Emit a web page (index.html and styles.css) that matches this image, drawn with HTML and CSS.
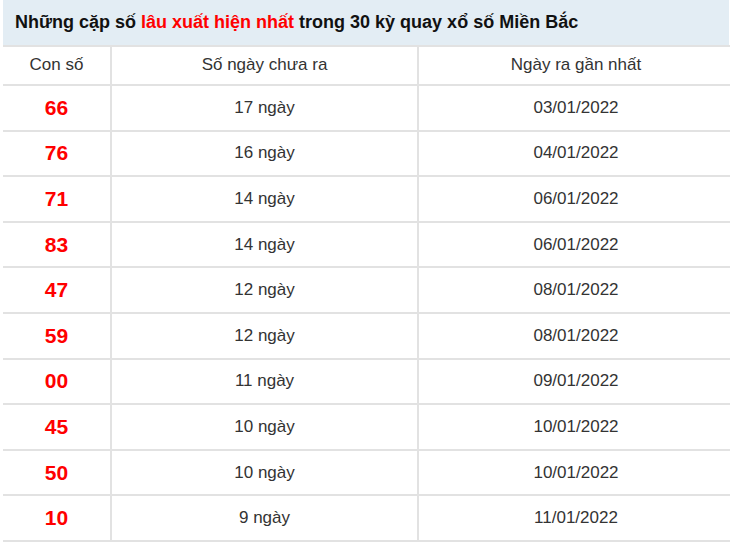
FILE: index.html
```html
<!DOCTYPE html>
<html lang="vi">
<head>
<meta charset="utf-8">
<title>Lô gan Miền Bắc</title>
<link rel="stylesheet" href="styles.css">
</head>
<body>
<div class="wrap">
  <div class="title">Những cặp số <span class="hl">lâu xuất hiện nhất</span> trong 30 kỳ quay xổ số Miền Bắc</div>
  <table class="tbl">
    <thead>
      <tr class="head"><th class="c1">Con số</th><th class="c2">Số ngày chưa ra</th><th class="c3">Ngày ra gần nhất</th></tr>
    </thead>
    <tbody>
      <tr><td class="num">66</td><td>17 ngày</td><td>03/01/2022</td></tr>
      <tr><td class="num">76</td><td>16 ngày</td><td>04/01/2022</td></tr>
      <tr><td class="num">71</td><td>14 ngày</td><td>06/01/2022</td></tr>
      <tr><td class="num">83</td><td>14 ngày</td><td>06/01/2022</td></tr>
      <tr><td class="num">47</td><td>12 ngày</td><td>08/01/2022</td></tr>
      <tr><td class="num">59</td><td>12 ngày</td><td>08/01/2022</td></tr>
      <tr><td class="num">00</td><td>11 ngày</td><td>09/01/2022</td></tr>
      <tr><td class="num">45</td><td>10 ngày</td><td>10/01/2022</td></tr>
      <tr><td class="num">50</td><td>10 ngày</td><td>10/01/2022</td></tr>
      <tr><td class="num">10</td><td>9 ngày</td><td>11/01/2022</td></tr>
    </tbody>
  </table>
</div>
</body>
</html>
```
FILE: styles.css
```css
html, body {
  margin: 0;
  padding: 0;
  background: #fff;
}
body {
  font-family: "Liberation Sans", Arial, sans-serif;
  color: #333;
}
.wrap {
  margin-left: 3px;
  width: 726px;
}
.title {
  height: 45px;
  line-height: 45px;
  background: #e3edf4;
  padding-left: 12px;
  font-size: 18px;
  font-weight: bold;
  color: #111;
  white-space: nowrap;
}
.hl {
  color: #f00;
}
.tbl {
  width: 726px;
  border-collapse: collapse;
  table-layout: fixed;
}
.tbl th, .tbl td {
  border: 2px solid #e2e2e2;
  text-align: center;
  padding: 0;
  font-size: 17px;
  font-weight: normal;
}
.tbl tr > :first-child { border-left: none; }
.tbl tr > :last-child { border-right: none; }
.c1 { width: 107px; }
.c2 { width: 305px; }
.c3 { width: 314px; }
.head { height: 39px; }
.head th { vertical-align: middle; padding-bottom: 1px; }
.tbl tbody tr { height: 45.6px; }
.tbl td { vertical-align: middle; }
.tbl td.num {
  color: #f00;
  font-weight: bold;
  font-size: 21px;
}
```
